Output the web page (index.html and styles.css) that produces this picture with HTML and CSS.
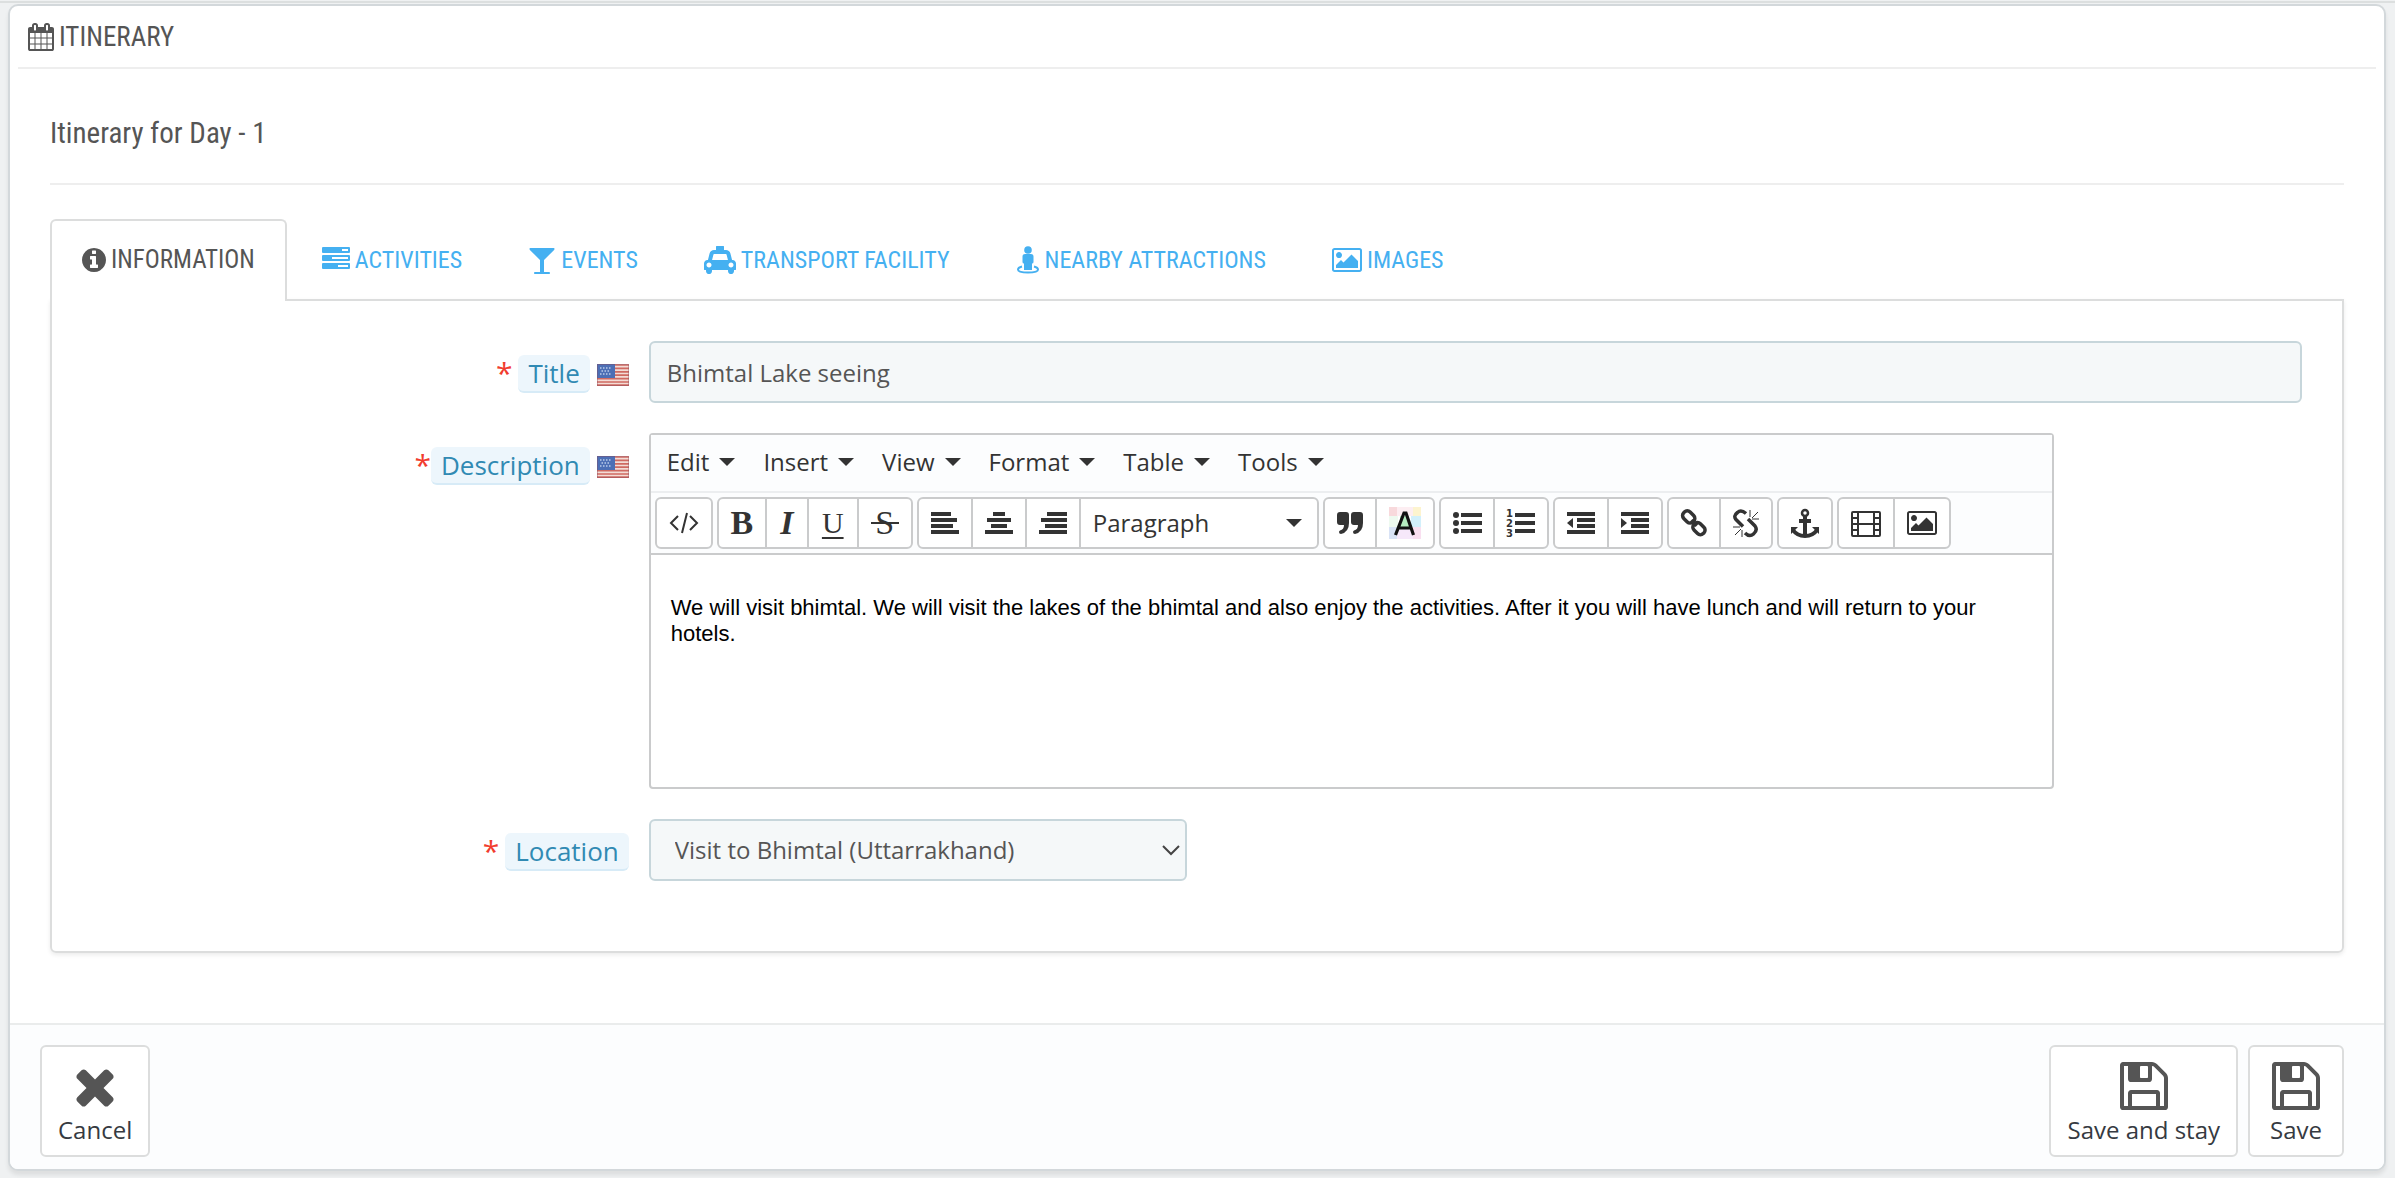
FILE: index.html
```html
<!DOCTYPE html>
<html lang="en">
<head>
<meta charset="utf-8">
<title>Itinerary</title>
<link rel="stylesheet" href="styles.css">
</head>
<body>
<svg class="sprite" aria-hidden="true">
  <symbol id="flag-us" viewBox="0 0 32 22">
    <rect width="32" height="22" fill="#f3dcd6"/>
    <path d="M0 1h32M0 4.400h32M0 7.800h32M0 11.200h32M0 14.600h32M0 18h32M0 21.200h32" stroke="#cf6a62" stroke-width="1.700"/>
    <rect width="18" height="14" fill="#4d6fb5"/>
    <path d="M3 4h12M4.500 7h9M3 10h12" stroke="#b9cbe9" stroke-width="1.500" stroke-dasharray="1.500 1.500"/>
    <rect x="0.500" y="0.500" width="31" height="21" fill="none" stroke="#8a4a5c" stroke-opacity=".4"/>
  </symbol>
  <symbol id="floppy" viewBox="0 0 1792 1792"><path d="M512 1536h768v-384h-768v384zm896 0h128v-896q0-14-10-38.500t-20-34.500l-281-281q-10-10-34-20t-39-10v416q0 40-28 68t-68 28h-576q-40 0-68-28t-28-68v-416h-128v1280h128v-416q0-40 28-68t68-28h832q40 0 68 28t28 68v416zm-384-928v-320q0-13-9.500-22.500t-22.500-9.500h-192q-13 0-22.500 9.500t-9.500 22.500v320q0 13 9.500 22.500t22.500 9.500h192q13 0 22.500-9.500t9.500-22.500zm640 32v928q0 40-28 68t-68 28h-1344q-40 0-68-28t-28-68v-1344q0-40 28-68t68-28h928q40 0 88 20t76 48l280 280q28 28 48 76t20 88z"/></symbol>
  <symbol id="picture" viewBox="0 0 1920 1792"><path d="M640 576q0 80-56 136t-136 56-136-56-56-136 56-136 136-56 136 56 56 136zm1024 384v448h-1408v-192l320-320 160 160 512-512zm96-704h-1600q-13 0-22.500 9.500t-9.500 22.500v1216q0 13 9.500 22.500t22.500 9.500h1600q13 0 22.500-9.500t9.500-22.500v-1216q0-13-9.500-22.500t-22.500-9.500zm160 32v1216q0 66-47 113t-113 47h-1600q-66 0-113-47t-47-113v-1216q0-66 47-113t113-47h1600q66 0 113 47t47 113z"/></symbol>
</svg>
<div class="topline"></div>
<form class="panel">
  <h1 class="panel-heading">
    <svg class="icon w26" viewBox="64 0 1664 1792"><path d="M192 1664h288v-288h-288v288zm352 0h320v-288h-320v288zm-352-352h288v-320h-288v320zm352 0h320v-320h-320v320zm-352-384h288v-288h-288v288zm736 736h320v-288h-320v288zm-384-736h320v-288h-320v288zm768 736h288v-288h-288v288zm-384-352h320v-320h-320v320zm-352-864v-288q0-13-9.500-22.500t-22.500-9.500h-64q-13 0-22.500 9.500t-9.500 22.500v288q0 13 9.500 22.500t22.500 9.500h64q13 0 22.500-9.500t9.500-22.500zm736 864h288v-320h-288v320zm-384-384h320v-288h-320v288zm384 0h288v-288h-288v288zm32-480v-288q0-13-9.500-22.500t-22.500-9.500h-64q-13 0-22.500 9.500t-9.500 22.500v288q0 13 9.500 22.500t22.500 9.500h64q13 0 22.500-9.500t9.500-22.500zm384-64v1280q0 52-38 90t-90 38h-1408q-52 0-90-38t-38-90v-1280q0-52 38-90t90-38h128v-96q0-66 47-113t113-47h64q66 0 113 47t47 113v96h384v-96q0-66 47-113t113-47h64q66 0 113 47t47 113v96h128q52 0 90 38t38 90z"/></svg>
    ITINERARY
  </h1>
  <div class="panel-body">
    <h2 class="subtitle">Itinerary for Day - 1</h2>
    <nav class="tabs">
      <a href="#information" class="tab active"><svg class="icon w24" viewBox="128 0 1536 1792"><path d="M1152 1376v-160q0-14-9-23t-23-9h-96v-512q0-14-9-23t-23-9h-320q-14 0-23 9t-9 23v160q0 14 9 23t23 9h96v320h-96q-14 0-23 9t-9 23v160q0 14 9 23t23 9h448q14 0 23-9t9-23zm-128-896v-160q0-14-9-23t-23-9h-192q-14 0-23 9t-9 23v160q0 14 9 23t23 9h192q14 0 23-9t9-23zm640 416q0 209-103 385.500t-279.500 279.500-385.500 103-385.500-103-279.500-279.500-103-385.500 103-385.500 279.500-279.500 385.500-103 385.500 103 279.500 279.500 103 385.500z"/></svg>INFORMATION</a>
      <a href="#activities" class="tab"><svg class="icon w28" viewBox="0 0 28 28"><path fill-rule="evenodd" d="M1 1h26q1 0 1 1v4q0 1-1 1H1q-1 0-1-1V2q0-1 1-1zM20 3v2h6V3zM1 9h26q1 0 1 1v4q0 1-1 1H1q-1 0-1-1v-4q0-1 1-1zM10 11v2h16v-2zM1 17h26q1 0 1 1v4q0 1-1 1H1q-1 0-1-1v-4q0-1 1-1zM16 19v2h10v-2z"/></svg>ACTIVITIES</a>
      <a href="#events" class="tab"><svg class="icon w28" viewBox="0 0 1792 1792"><path d="M1699 186q0 35-43 78l-632 632v768h320q26 0 45 19t19 45-19 45-45 19h-896q-26 0-45-19t-19-45 19-45 45-19h320v-768l-632-632q-43-43-43-78 0-23 18-36.500t38-17.500 43-4h1408q23 0 43 4t38 17.500 18 36.500z"/></svg>EVENTS</a>
      <a href="#transport" class="tab"><svg class="icon w32" viewBox="0 0 2048 1792"><path d="M1824 896q93 0 158.500 65.500t65.500 158.500v384q0 14-9 23t-23 9h-96v64q0 80-56 136t-136 56-136-56-56-136v-64h-1024v64q0 80-56 136t-136 56-136-56-56-136v-64h-96q-14 0-23-9t-9-23v-384q0-93 65.500-158.500t158.500-65.500h28l105-419q23-94 104-157.500t179-63.500h128v-224q0-14 9-23t23-9h448q14 0 23 9t9 23v224h128q98 0 179 63.500t104 157.500l105 419h28zm-1504 480q66 0 113-47t47-113-47-113-113-47-113 47-47 113 47 113 113 47zm196-480h1016l-89-357q-2-8-14-17.500t-21-9.500h-768q-9 0-21 9.500t-14 17.500zm1212 480q66 0 113-47t47-113-47-113-113-47-113 47-47 113 47 113 113 47z"/></svg>TRANSPORT FACILITY</a>
      <a href="#attractions" class="tab"><svg class="icon w24" viewBox="0 0 24 28"><circle cx="12" cy="4" r="3.800"/><path d="M9 8h6q2.500 0 2.500 2.500V16q0 1.500-1.500 1.500V24H8v-6.500q-1.500 0-1.500-1.500v-5.500Q6.500 8 9 8z"/><path d="M6 20.500Q2 21.500 2 23.500q0 3 10 3t10-3q0-2-4-3" fill="none" stroke="currentColor" stroke-width="2"/></svg>NEARBY ATTRACTIONS</a>
      <a href="#images" class="tab"><svg class="icon w30"><use href="#picture"/></svg>IMAGES</a>
    </nav>
    <section class="tab-content" id="information">
      <div class="row">
        <div class="label-col"><span class="star">*</span><label class="pill spaced" for="title">Title</label><svg class="flag"><use href="#flag-us"/></svg></div>
        <div class="field-col"><input class="control" id="title" type="text" value="Bhimtal Lake seeing"></div>
      </div>
      <div class="row">
        <div class="label-col"><span class="star">*</span><label class="pill" for="description">Description</label><svg class="flag"><use href="#flag-us"/></svg></div>
        <div class="field-col">
          <div class="editor">
            <div class="menubar">
              <button type="button">Edit</button>
              <button type="button">Insert</button>
              <button type="button">View</button>
              <button type="button">Format</button>
              <button type="button">Table</button>
              <button type="button">Tools</button>
            </div>
            <div class="toolbar">
              <div class="group">
                <button type="button" class="b54" aria-label="Source code"><svg viewBox="0 0 32 32"><path d="M10 9l-7 7 7 7M22 9l7 7-7 7M19 6l-5 20" fill="none" stroke="currentColor" stroke-width="2"/></svg></button>
              </div>
              <div class="group">
                <button type="button" class="b46 glyph bold">B</button>
                <button type="button" class="b40 glyph italic">I</button>
                <button type="button" class="b48 glyph underline">U</button>
                <button type="button" class="b52 glyph strike">S</button>
              </div>
              <div class="group">
                <button type="button" class="b52" aria-label="Align left"><svg viewBox="0 0 32 32"><path d="M2 7h20M2 13h26M2 19h22M2 25h28" stroke="currentColor" stroke-width="4"/></svg></button>
                <button type="button" class="b52" aria-label="Align center"><svg viewBox="0 0 32 32"><path d="M10 7h12M4 13h24M8 19h16M2 25h28" stroke="currentColor" stroke-width="4"/></svg></button>
                <button type="button" class="b52" aria-label="Align right"><svg viewBox="0 0 32 32"><path d="M10 7h20M4 13h26M8 19h22M2 25h28" stroke="currentColor" stroke-width="4"/></svg></button>
                <button type="button" class="format">Paragraph</button>
              </div>
              <div class="group">
                <button type="button" class="b50" aria-label="Blockquote"><svg viewBox="0 0 32 32"><path d="M6 5h6q3 0 3 3v8q0 9-8 11-2 0-2-2 0-1 1-1.500 4-1 4-5.500H6q-3 0-3-3V8q0-3 3-3z"/><path d="M20 5h6q3 0 3 3v8q0 9-8 11-2 0-2-2 0-1 1-1.500 4-1 4-5.500h-4q-3 0-3-3V8q0-3 3-3z"/></svg></button>
                <button type="button" class="b56" aria-label="Text color"><svg viewBox="0 0 32 32"><path fill="#f8d9dc" d="M0 0h8v9H0z"/><path fill="#fdeef2" d="M8 0h16v9H8z"/><path fill="#fdf4cf" d="M24 0h8v9h-8z"/><path fill="#eefaf0" d="M0 9h9v11H0z"/><path fill="#d2f0fb" d="M22 9h10v11H22z"/><path fill="#b5ecc0" d="M11 9h9v11h-9z"/><path fill="#d9e3f6" d="M0 20h8v12H0z"/><path fill="#f6e8fa" d="M8 20h16v12H8z"/><path fill="#f9dff0" d="M24 20h8v12h-8z"/><path d="M6.500 28L15 6h2l7.500 22M10 21h12" fill="none" stroke="#111" stroke-width="3.200"/></svg></button>
              </div>
              <div class="group">
                <button type="button" class="b52" aria-label="Bullet list"><svg viewBox="0 0 32 32"><circle cx="5" cy="8" r="3"/><circle cx="5" cy="16" r="3"/><circle cx="5" cy="24" r="3"/><path d="M10 8h21M10 16h21M10 24h21" stroke="currentColor" stroke-width="4"/></svg></button>
                <button type="button" class="b52" aria-label="Numbered list"><svg viewBox="0 0 32 32"><g class="digits"><text x="1" y="10">1</text><text x="1" y="20">2</text><text x="1" y="30">3</text></g><path d="M10 8h20M10 16h20M10 24h20" stroke="currentColor" stroke-width="4"/></svg></button>
              </div>
              <div class="group">
                <button type="button" class="b52" aria-label="Decrease indent"><svg viewBox="0 0 32 32"><path d="M2 7h28M12 13h18M12 19h18M2 25h28" stroke="currentColor" stroke-width="4"/><path d="M8 11v10l-6-5z"/></svg></button>
                <button type="button" class="b52" aria-label="Increase indent"><svg viewBox="0 0 32 32"><path d="M2 7h28M12 13h18M12 19h18M2 25h28" stroke="currentColor" stroke-width="4"/><path d="M2 11v10l6-5z"/></svg></button>
              </div>
              <div class="group">
                <button type="button" class="b50" aria-label="Insert link"><svg viewBox="0 0 32 32"><g transform="rotate(45 16 16)" fill="none" stroke="currentColor" stroke-width="3.500"><rect x="1.500" y="11" width="13" height="9" rx="4"/><rect x="17" y="12" width="13" height="9" rx="4"/><path d="M12 16h8"/></g></svg></button>
                <button type="button" class="b50" aria-label="Remove link"><svg viewBox="0 0 32 32"><path d="M16 6.500Q11 2 7.500 5.500 3 9 6 12.500l7 7M15 26q4.500 4.500 8.500 1 4.500-4 1.500-8l-7-7" fill="none" stroke="currentColor" stroke-width="3.500"/><path d="M20 3v7M28 5l-6 6M29 12h-7M3 20h7M11 22l-6 6M12 23v7" stroke="currentColor" stroke-width="1"/></svg></button>
              </div>
              <div class="group">
                <button type="button" class="b52" aria-label="Anchor"><svg viewBox="0 0 32 32"><g fill="none" stroke="currentColor"><circle cx="16" cy="6" r="3" stroke-width="2.500"/><path d="M16 9v18M10 14h12" stroke-width="4"/><path d="M4 23q4 6 12 6t12-6" stroke-width="4"/></g><path d="M2 20h7l-7 7zM30 20h-7l7 7z"/></svg></button>
              </div>
              <div class="group">
                <button type="button" class="b54" aria-label="Insert video"><svg viewBox="0 0 32 32"><path d="M3 5h26q1 0 1 1v22q0 1-1 1H3q-1 0-1-1V6q0-1 1-1zM8 5v24M24 5v24M8 17h16M2 11h6M2 17h6M2 23h6M24 11h6M24 17h6M24 23h6" fill="none" stroke="currentColor" stroke-width="2"/></svg></button>
                <button type="button" class="b54" aria-label="Insert image"><svg class="w30"><use href="#picture"/></svg></button>
              </div>
            </div>
            <div class="edit-area" id="description" contenteditable="true" role="textbox" aria-label="Description">
              <p>We will visit bhimtal. We will visit the lakes of the bhimtal and also enjoy the activities. After it you will have lunch and will return to your hotels.</p>
            </div>
          </div>
        </div>
      </div>
      <div class="row">
        <div class="label-col"><span class="star">*</span><label class="pill spaced" for="location">Location</label></div>
        <div class="field-col">
          <div class="select-wrap">
            <select class="control" id="location"><option>Visit to Bhimtal (Uttarrakhand)</option></select>
            <svg class="chevron" viewBox="0 0 20 12"><path d="M2 2l8 8 8-8" fill="none" stroke="#444" stroke-width="2"/></svg>
          </div>
        </div>
      </div>
    </section>
  </div>
  <footer class="panel-footer">
    <button type="button" class="action"><svg viewBox="0 0 1792 1792"><path d="M1490 1322q0 40-28 68l-136 136q-28 28-68 28t-68-28l-294-294-294 294q-28 28-68 28t-68-28l-136-136q-28-28-28-68t28-68l294-294-294-294q-28-28-28-68t28-68l136-136q28-28 68-28t68 28l294 294 294-294q28-28 68-28t68 28l136 136q28 28 28 68t-28 68l-294 294 294 294q28 28 28 68z"/></svg>Cancel</button>
    <span class="spring"></span>
    <button type="submit" class="action"><svg><use href="#floppy"/></svg>Save and stay</button>
    <button type="submit" class="action"><svg><use href="#floppy"/></svg>Save</button>
  </footer>
</form>
</body>
</html>
```
FILE: styles.css
```css
* { box-sizing: border-box; }
body {
  margin: 0;
  padding: 1px 9px 7px 8px;
  background: #eff1f2;
  color: #555;
  font: 24px/32px "Open Sans", sans-serif;
}
button, input, select { font: inherit; color: inherit; margin: 0; }
svg { fill: currentColor; flex: none; }
.sprite { position: absolute; width: 0; height: 0; }
.topline { height: 2px; margin: 0 -9px 1px -8px; background: #dcdfdf; }

.panel {
  background: #fff;
  border: 2px solid #d3d8db;
  border-radius: 10px;
  box-shadow: 0 4px 4px rgba(0, 0, 0, .08);
}
.panel-heading {
  display: flex;
  align-items: center;
  gap: 5px;
  height: 63px;
  margin: 0 8px;
  padding: 0 10px;
  border-bottom: 2px solid #eee;
  font: 27px/36px "Roboto Condensed", Roboto, sans-serif;
}
.icon { height: 28px; }
.w24 { width: 24px; }
.w26 { width: 26px; }
.w28 { width: 28px; }
.w30 { width: 30px; }
.w32 { width: 32px; }

.panel-body { padding: 46px 40px 70px; }
.subtitle {
  margin: 0 0 34px;
  padding-bottom: 32px;
  border-bottom: 2px solid #eee;
  font: 29px/36px "Roboto Condensed", Roboto, sans-serif;
}

.tabs { display: flex; gap: 4px; }
.tab {
  display: flex;
  align-items: center;
  gap: 5px;
  height: 80px;
  padding: 0 29px;
  border: 2px solid transparent;
  border-bottom: 0;
  border-radius: 6px 6px 0 0;
  color: #45b0f1;
  font: 24px/36px "Roboto Condensed", Roboto, sans-serif;
  text-decoration: none;
}
.tab.active {
  z-index: 1;
  height: 82px;
  margin-bottom: -2px;
  padding: 0 30px 2px;
  background: #fff;
  border-color: #dcdddd;
  color: #555;
  font-size: 25px;
}
.tab-content {
  display: flex;
  flex-direction: column;
  gap: 30px;
  padding: 40px 30px 70px 29px;
  border: 2px solid #dcdddd;
  border-radius: 0 0 6px 6px;
  box-shadow: 0 2px 4px rgba(0, 0, 0, .08);
}

.row { display: flex; align-items: flex-start; }
.label-col {
  display: flex;
  align-items: center;
  justify-content: flex-end;
  width: 25%;
  padding: 14px 10px 0;
  font-size: 26px;
  line-height: 36px;
}
.field-col { width: 75%; padding: 0 10px; }
.star { align-self: flex-start; color: #f13c2e; font-size: 30px; }
.pill {
  padding: 0 10px;
  background: #edf6fc;
  border-bottom: 2px solid #d7ebf7;
  border-radius: 6px;
  color: #318ab3;
}
.pill.spaced { margin-left: 6px; }
.flag { width: 32px; height: 22px; margin: 2px 0 0 7px; }

.control {
  display: block;
  width: 100%;
  height: 62px;
  padding: 0 16px;
  background: #f5f8f9;
  border: 2px solid #c7d6db;
  border-radius: 6px;
}
.select-wrap { position: relative; width: calc((100% + 20px) / 3 - 20px); }
select.control { appearance: none; padding: 0 24px; }
.chevron { position: absolute; right: 6px; top: 25px; width: 20px; height: 12px; }

.editor { width: 85%; border: 2px solid #cacbcc; border-radius: 4px; color: #333; }
.menubar {
  display: flex;
  background: #fcfdfe;
  height: 58px;
  border-bottom: 2px solid #eceef0;
}
.menubar button {
  display: flex;
  align-items: center;
  gap: 10px;
  padding: 0 12px 2px 16px;
  background: none;
  border: 0;
}
.menubar button::after, .format::after {
  content: "";
  border: 8px solid transparent;
  border-top-color: #333;
  border-bottom: 0;
}
.toolbar {
  display: flex;
  flex-wrap: wrap;
  gap: 4px;
  padding: 4px;
  background: #fcfdfe;
  border-bottom: 2px solid #cacbcc;
}
.group {
  display: flex;
  height: 52px;
  background: #fff;
  border: 2px solid #cacbcc;
  border-radius: 6px;
}
.group button {
  display: flex;
  align-items: center;
  justify-content: center;
  box-sizing: content-box;
  padding: 0;
  background: none;
  border: 0;
}
.group button + button { border-left: 2px solid #cacbcc; }
.group svg { height: 32px; }
.group svg:not(.w30) { width: 32px; }
.b40 { width: 40px; }
.b46 { width: 46px; }
.b48 { width: 48px; }
.b50 { width: 50px; }
.b52 { width: 52px; }
.b54 { width: 54px; }
.b56 { width: 56px; }
.group .glyph { font: bold 34px/40px "Liberation Serif", serif; }
.group .italic { font-style: italic; }
.group .underline { font-weight: normal; font-size: 30px; text-decoration: underline 2px; text-underline-offset: 4px; }
.group .strike {
  font-weight: normal;
  background: linear-gradient(#333, #333) center / 28px 2px no-repeat;
}
.digits { font: bold 10px "DejaVu Sans", sans-serif; }
.group .format { width: 209px; padding: 0 15px 0 12px; justify-content: space-between; }
.edit-area {
  height: 232px;
  padding: 40px 20px 0;
  color: #000;
  font: 22px/26px "Liberation Sans", Arial, sans-serif;
}
.edit-area p { margin: 0; }

.panel-footer {
  display: flex;
  gap: 10px;
  padding: 20px 40px 12px 30px;
  background: #fcfdfe;
  border-top: 2px solid #eaecec;
  border-radius: 0 0 8px 8px;
}
.spring { flex: 1; }
.action {
  display: flex;
  flex-direction: column;
  align-items: center;
  min-width: 96px;
  padding: 11px 16px 9px;
  background: #fff;
  border: 2px solid #dcdddd;
  border-radius: 6px;
  color: #363a41;
}
.action svg { width: 56px; height: 56px; color: #555; }
```
